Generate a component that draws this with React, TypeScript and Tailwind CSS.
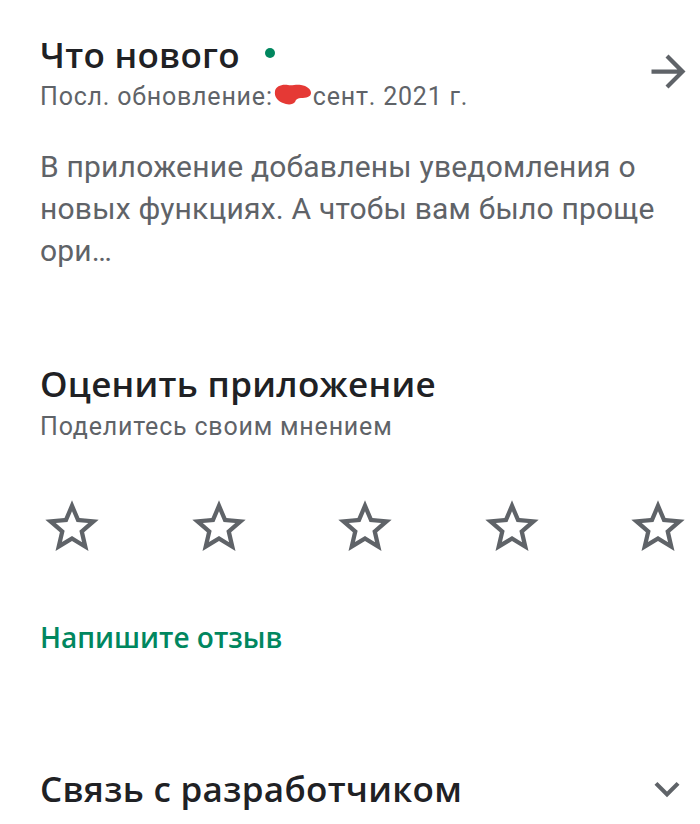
import React from "react";

const body = { fontFamily: "Roboto, 'Noto Sans', sans-serif" };
const display = { fontFamily: "'Open Sans', 'Noto Sans', sans-serif" };

function StarOutline() {
  return (
    <svg viewBox="0 0 24 24" className="h-[64px] w-[64px]" fill="#5f6368">
      <path d="M22 9.24l-7.19-.62L12 2 9.19 8.63 2 9.24l5.46 4.73L5.82 21 12 17.27 18.18 21l-1.63-7.03L22 9.24zM12 15.4l-3.76 2.27 1-4.28-3.32-2.88 4.38-.38L12 6.1l1.71 4.04 4.38.38-3.32 2.88 1 4.28L12 15.4z" />
    </svg>
  );
}

export default function App() {
  return (
    <div className="min-h-[824px] w-[700px] overflow-hidden bg-white" style={body}>
      {/* What's new */}
      <section className="flex items-start pl-10 pr-[6px] pt-[35px]">
        <div className="flex-1">
          <div className="flex items-center">
            <h2
              className="text-[35px] leading-[40px] font-semibold tracking-[0.3px] text-[#202124]"
              style={display}
            >
              Что нового
            </h2>
            <span className="ml-[25px] mb-[4px] h-[10px] w-[10px] rounded-full bg-[#01875f]" />
          </div>
          <p className="mt-[7px] flex items-start text-[25px] leading-[30px] tracking-[0.8px] text-[#5f6368]">
            <span>Посл. обновление:</span>
            <svg viewBox="0 0 40 22" className="mt-[1px] h-[22px] w-[40px] shrink-0">
              <path
                d="M2 8c1-5 7-7 13-6 4 1 8-1 13 0 6 1 10 4 10 8 0 4-5 5-10 5-3 0-5 1-6 4-2 3-8 3-12 1-5-2-9-6-8-12z"
                fill="#e53935"
              />
            </svg>
            <span>сент. 2021 г.</span>
          </p>
        </div>
        <svg viewBox="0 0 24 24" className="mt-[11px] h-[51px] w-[51px]" fill="#5f6368">
          <path d="M12 4l-1.41 1.41L16.17 11H4v2h12.17l-5.58 5.59L12 20l8-8z" />
        </svg>
      </section>

      <p className="mt-[34px] whitespace-nowrap pl-10 text-[30px] leading-[42px] tracking-[0.2px] text-[#5f6368]">
        В приложение добавлены уведомления о
        <br />
        новых функциях. А чтобы вам было проще
        <br />
        ори…
      </p>

      {/* Rate */}
      <section className="mt-[92px] pl-10">
        <h2
          className="text-[35px] leading-[40px] font-semibold tracking-[0.3px] text-[#202124]"
          style={display}
        >
          Оценить приложение
        </h2>
        <p className="mt-[8px] text-[25px] leading-[30px] tracking-[0.8px] text-[#5f6368]">
          Поделитесь своим мнением
        </p>
      </section>

      <div className="mt-[53px] ml-10 mr-[10px] flex justify-between">
        <StarOutline />
        <StarOutline />
        <StarOutline />
        <StarOutline />
        <StarOutline />
      </div>

      <button
        className="mt-[60px] ml-10 block text-[28px] leading-[36px] font-semibold text-[#01875f]"
        style={display}
      >
        Напишите отзыв
      </button>

      {/* Developer contact */}
      <section className="mt-[109px] flex items-center pl-10 pr-[8px]">
        <h2
          className="flex-1 text-[35px] leading-[40px] font-semibold tracking-[0.3px] text-[#202124]"
          style={display}
        >
          Связь с разработчиком
        </h2>
        <svg viewBox="0 0 24 24" className="h-[50px] w-[50px]" fill="#5f6368">
          <path d="M16.59 8.59L12 13.17 7.41 8.59 6 10l6 6 6-6z" />
        </svg>
      </section>
    </div>
  );
}
